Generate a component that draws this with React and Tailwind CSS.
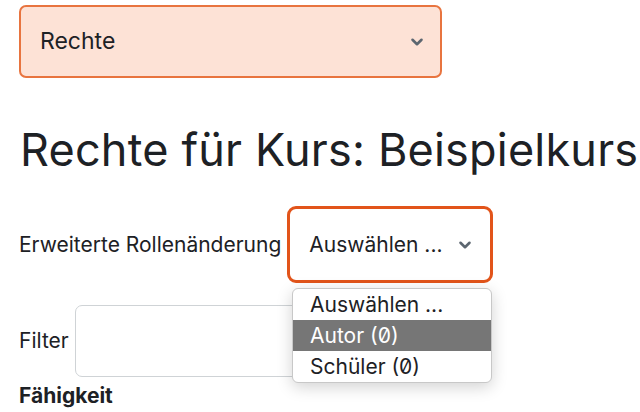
import React from 'react'

const Chevron = ({ className }) => (
  <svg className={className} viewBox="0 0 16 16" fill="none" stroke="currentColor" strokeWidth="2.3" strokeLinecap="round" strokeLinejoin="round">
    <path d="M4 6l4 4 4-4" />
  </svg>
)

const App = () => {
  return (
    <div className="w-[640px] h-[412px] overflow-hidden bg-white pl-[19px] pt-[5px] text-[#1d2125] font-['Inter',sans-serif] slashed-zero">
      {/* Kurs-Navigation */}
      <div className="w-[423px] h-[73px] flex items-center justify-between pl-[19px] pr-[14px] bg-[#fde2d6] border-2 border-[#e8743f] rounded-[7px]">
        <span className="text-[23px]">Rechte</span>
        <Chevron className="w-[18px] h-[18px] text-[#5c6670]" />
      </div>

      <h1 className="mt-[45px] ml-[1px] text-[45px] leading-[54px] tracking-[0.2px] whitespace-nowrap font-normal">
        Rechte für Kurs: Beispielkurs
      </h1>

      {/* Rollenauswahl */}
      <div className="relative mt-[29px]">
        <div className="flex items-center gap-[6px]">
          <span className="text-[21px] whitespace-nowrap">Erweiterte Rollenänderung</span>
          <div className="w-[206px] h-[77px] flex items-center justify-between pl-[19px] pr-[16px] border-[3px] border-[#e2541a] rounded-[9px]">
            <span className="text-[21px]">Auswählen ...</span>
            <Chevron className="w-[18px] h-[18px] text-[#5c6670]" />
          </div>
        </div>

        <div className="flex items-center gap-[6px] mt-[22px]">
          <span className="text-[21px]">Filter</span>
          <div className="w-[300px] h-[72px] border border-[#cfd3d6] rounded-[7px]" />
        </div>

        <div className="mt-[6px] text-[21px] leading-[26px] font-bold">Fähigkeit</div>

        {/* geöffnete Liste */}
        <div className="absolute left-[273px] top-[82px] w-[200px] bg-white border border-[#c8c8c8] rounded-[6px] shadow-[0_4px_16px_rgba(0,0,0,0.18)] overflow-hidden text-[21px] leading-[31px]">
          <div className="pl-[17px]">Auswählen ...</div>
          <div className="pl-[17px] bg-[#767676] text-white">Autor (0)</div>
          <div className="pl-[17px]">Schüler (0)</div>
        </div>
      </div>
    </div>
  )
}

export default App
